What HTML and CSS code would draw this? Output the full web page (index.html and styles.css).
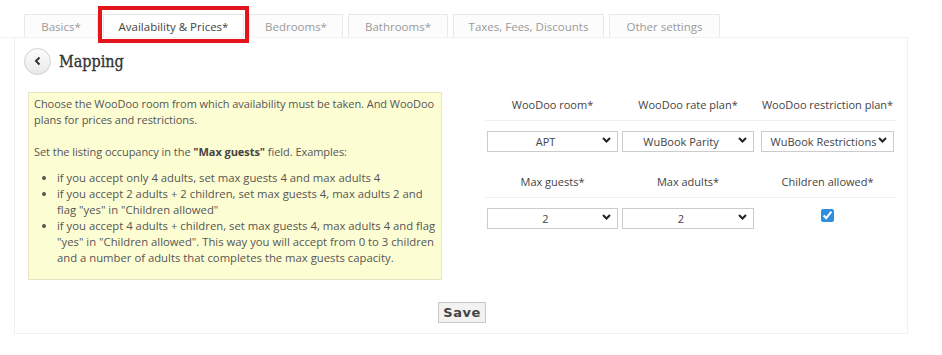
FILE: index.html
```
<!DOCTYPE html>
<html lang="en">
<head>
    <meta charset="UTF-8">
    <title>Mapping</title>
    <link rel="stylesheet" href="styles.css">
</head>
<body>
    <ul class="tabs">
        <li class="tab tab-basics">Basics*</li>
        <li class="tab tab-active">Availability &amp; Prices*</li>
        <li class="tab tab-bedrooms">Bedrooms*</li>
        <li class="tab tab-bathrooms">Bathrooms*</li>
        <li class="tab tab-taxes">Taxes, Fees, Discounts</li>
        <li class="tab tab-other">Other settings</li>
    </ul>

    <div class="panel">
        <div class="panel-title">
            <span class="back-btn">
                <svg width="10" height="10" viewBox="0 0 10 10"><path d="M6.5 1.5 L3 5 L6.5 8.5" fill="none" stroke="#333" stroke-width="2"/></svg>
            </span>
            <h2>Mapping</h2>
        </div>

        <div class="mapping-row">
            <div class="note">
                <p>Choose the WooDoo room from which availability must be taken. And WooDoo plans for prices and restrictions.</p>
                <p class="tight">Set the listing occupancy in the <b>"Max guests"</b> field. Examples:</p>
                <ul>
                    <li>if you accept only 4 adults, set max guests 4 and max adults 4</li>
                    <li>if you accept 2 adults + 2 children, set max guests 4, max adults 2 and flag "yes" in "Children allowed"</li>
                    <li>if you accept 4 adults + children, set max guests 4, max adults 4 and flag "yes" in "Children allowed". This way you will accept from 0 to 3 children and a number of adults that completes the max guests capacity.</li>
                </ul>
            </div>

            <table class="fields">
                <colgroup>
                    <col class="col-a">
                    <col class="col-b">
                    <col class="col-c">
                </colgroup>
                <tr>
                    <th>WooDoo room*</th>
                    <th>WooDoo rate plan*</th>
                    <th>WooDoo restriction plan*</th>
                </tr>
                <tr>
                    <td><div class="sel"><select><option>APT</option></select><svg class="chev" width="9" height="6" viewBox="0 0 9 6"><path d="M1 1 L4.5 4.5 L8 1" fill="none" stroke="#222" stroke-width="2"/></svg></div></td>
                    <td><div class="sel"><select><option>WuBook Parity</option></select><svg class="chev" width="9" height="6" viewBox="0 0 9 6"><path d="M1 1 L4.5 4.5 L8 1" fill="none" stroke="#222" stroke-width="2"/></svg></div></td>
                    <td><div class="sel sel-wide"><select><option>WuBook Restrictions</option></select><svg class="chev" width="9" height="6" viewBox="0 0 9 6"><path d="M1 1 L4.5 4.5 L8 1" fill="none" stroke="#222" stroke-width="2"/></svg></div></td>
                </tr>
                <tr>
                    <th>Max guests*</th>
                    <th>Max adults*</th>
                    <th>Children allowed*</th>
                </tr>
                <tr>
                    <td><div class="sel"><select><option>2</option></select><svg class="chev" width="9" height="6" viewBox="0 0 9 6"><path d="M1 1 L4.5 4.5 L8 1" fill="none" stroke="#222" stroke-width="2"/></svg></div></td>
                    <td><div class="sel"><select><option>2</option></select><svg class="chev" width="9" height="6" viewBox="0 0 9 6"><path d="M1 1 L4.5 4.5 L8 1" fill="none" stroke="#222" stroke-width="2"/></svg></div></td>
                    <td class="check-cell"><input type="checkbox" checked></td>
                </tr>
            </table>
        </div>

        <div class="actions">
            <button type="button" class="save-btn">Save</button>
        </div>
    </div>

    <div class="highlight"></div>
</body>
</html>
```

FILE: styles.css
```
body {
    margin: 0;
    font-family: "Open Sans", sans-serif;
    color: #555;
    background: #fff;
    width: 942px;
    height: 355px;
    position: relative;
}

.tabs {
    list-style: none;
    margin: 0;
    padding: 14px 0 0 24px;
    display: flex;
    gap: 5px;
    width: 884px;
    border-bottom: 1px solid #f2f2f2;
}

.tab {
    height: 22px;
    line-height: 23px;
    border: 1px solid #e8e8e8;
    border-bottom: none;
    background: #fcfcfc;
    color: #9a9a9a;
    font-size: 11.5px;
    text-align: center;
}

.tab-basics { width: 72px; }
.tab-active { width: 139px; color: #444; background: #fff; }
.tab-bedrooms { width: 92px; }
.tab-bathrooms { width: 98px; }
.tab-taxes { width: 149px; }
.tab-other { width: 109px; }

.highlight {
    position: absolute;
    left: 98px;
    top: 6px;
    width: 143px;
    height: 29px;
    border: 4px solid #e3151b;
}

.panel {
    margin-left: 14px;
    width: 892px;
    border: 1px solid #f0f0f0;
    border-top: none;
    padding: 9px 0 10px;
}

.panel-title {
    display: flex;
    align-items: center;
    padding-left: 9px;
    height: 28px;
}

.back-btn {
    width: 25px;
    height: 25px;
    border-radius: 50%;
    border: 1px solid #cfcfcf;
    background: linear-gradient(#fdfdfd, #e9e9e9);
    display: flex;
    align-items: center;
    justify-content: center;
    margin-right: 8px;
}

.panel-title h2 {
    margin: 0;
    font-family: "DejaVu Serif", serif;
    font-size: 16px;
    font-weight: normal;
    font-stretch: condensed;
    color: #333;
    -webkit-text-stroke: 0.3px #333;
}

.mapping-row {
    display: flex;
    align-items: flex-start;
    margin-top: 17px;
    padding-left: 13px;
}

.note {
    width: 403px;
    background: #fdfdd3;
    border: 1px solid #e6e6c6;
    padding: 3px 4px 13px 5px;
    font-size: 11px;
    line-height: 16px;
    letter-spacing: -0.05px;
    color: #555;
}

.note p {
    margin: 0 0 16px;
}

.note p.tight {
    margin-bottom: 10px;
}

.note ul {
    margin: 0;
    padding-left: 23px;
    font-size: 11.3px;
    letter-spacing: 0;
}

.note b {
    color: #444;
}

.fields {
    margin-left: 43px;
    margin-top: -6px;
    width: 411px;
    table-layout: fixed;
    border-collapse: collapse;
}

.col-a { width: 135px; }
.col-b { width: 136px; }
.col-c { width: 140px; }

.fields th {
    font-weight: normal;
    font-size: 11px;
    color: #444;
    line-height: 16px;
    padding: 11px 2px 7px;
    border-bottom: 1px solid #f0f0f0;
    white-space: nowrap;
}

.fields td {
    padding: 8px 2px 11px;
    text-align: center;
}

.fields th:last-child,
.fields td:last-child {
    padding-left: 5px;
}

.sel {
    position: relative;
}

.sel select {
    width: 100%;
    height: 21px;
    appearance: none;
    -webkit-appearance: none;
    border: 1px solid #ccc;
    border-radius: 0;
    background: #fff;
    font-family: "Open Sans", sans-serif;
    font-size: 11px;
    color: #444;
    text-align: center;
    text-align-last: center;
    padding: 0 14px 0 0;
}

.sel-wide select {
    padding: 0 8px 0 0;
}

.chev {
    position: absolute;
    right: 7px;
    top: 8px;
}

.check-cell input {
    margin: 0;
    width: 13px;
    height: 13px;
    accent-color: #2e8fe0;
    position: relative;
    top: -2px;
}

.actions {
    text-align: center;
    margin-top: 20px;
}

.save-btn {
    font-family: "DejaVu Sans", sans-serif;
    font-size: 13px;
    font-weight: 600;
    color: #444;
    background: #f2f2f2;
    border: 1px solid #c8c8c8;
    padding: 1px 4px;
    height: 21px;
    letter-spacing: 0.5px;
    position: relative;
    left: 1px;
}
```
